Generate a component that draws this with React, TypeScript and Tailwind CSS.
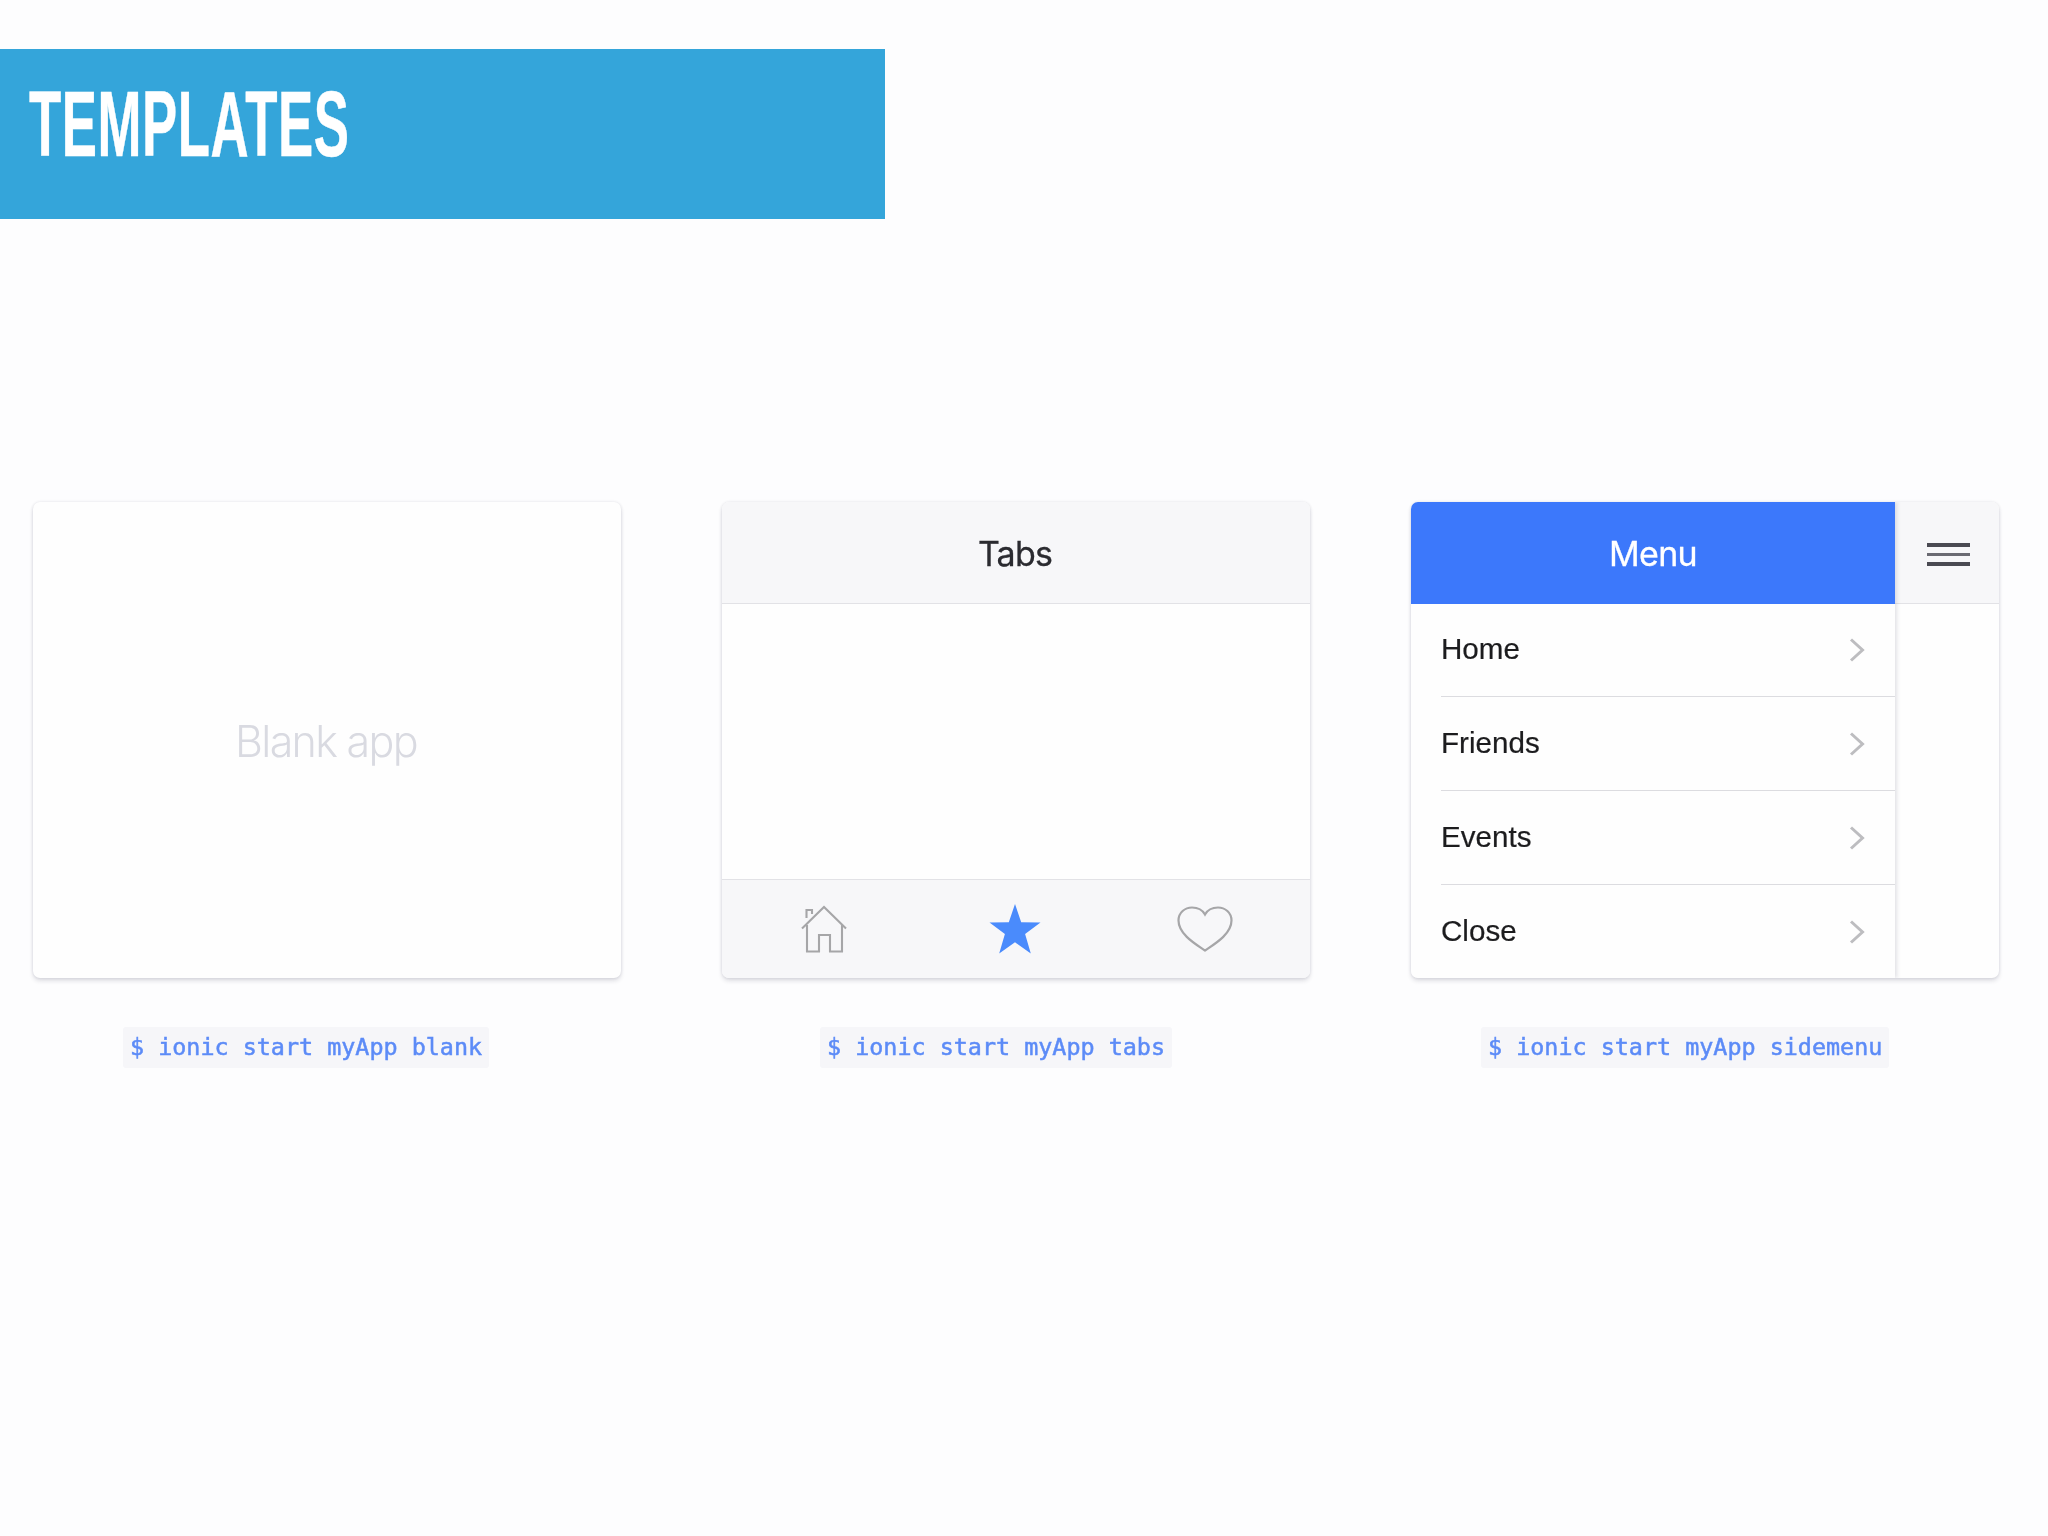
const menuItems = ["Home", "Friends", "Events", "Close"];

const HomeIcon = () => (
  <svg width="46" height="48" viewBox="0 0 46 48" fill="none" stroke="#a6a6a8" strokeWidth="2.1">
    <path d="M1 23.5 L23 2 L45 23.5" />
    <path d="M5.5 13 V5 H11 V9" />
    <path d="M6 20 V46.5 H18 V30 H29 V46.5 H41 V20" />
  </svg>
);

const StarIcon = () => (
  <svg width="52" height="52" viewBox="0 0 52 52" fill="#4a8bfc" className="ml-[5px]">
    <path d="M26 1 L32.2 19.2 L51.5 19.4 L36.1 31 L41.8 50.5 L26 39.3 L10.2 50.5 L15.9 31 L0.5 19.4 L19.8 19.2 Z" />
  </svg>
);

const HeartIcon = () => (
  <svg width="56" height="46" viewBox="0 0 56 46" fill="none" stroke="#a6a6a8" strokeWidth="2.2">
    <path d="M28 44.5 C21 39.5 1.5 29 1.5 14.5 C1.5 6.5 8 1.5 15 1.5 C20.5 1.5 25.5 4 28 8.5 C30.5 4 35.5 1.5 41 1.5 C48 1.5 54.5 6.5 54.5 14.5 C54.5 29 35 39.5 28 44.5 Z" />
  </svg>
);

const Chevron = () => (
  <svg width="16" height="24" viewBox="0 0 16 24" fill="none" stroke="#bdbdc0" strokeWidth="3">
    <path d="M2 1.5 L13.5 12 L2 22.5" />
  </svg>
);

const Command = ({ text, offset }: { text: string; offset: string }) => (
  <div className={`mt-[49px] ${offset} w-fit h-[41px] px-[7px] flex items-center bg-[#f6f6f9] rounded-[3px]`}>
    <code className="font-['DejaVu_Sans_Mono',monospace] text-[23.4px] leading-none text-[#5c8bf7] whitespace-pre [-webkit-text-stroke:0.5px_#5c8bf7] blur-[0.4px]">
      {text}
    </code>
  </div>
);

const cardClass =
  "w-[588px] h-[476px] rounded-[7px] bg-[#fefefe] overflow-hidden shadow-[0_0_3px_rgba(40,40,70,0.12),0_3px_4px_rgba(40,40,70,0.14)]";

export default function App() {
  return (
    <div className="min-h-screen w-full bg-[#fdfdfe] pt-[49px] font-['Inter',sans-serif]">
      {/* Title banner */}
      <div className="w-[885px] h-[170px] bg-[#34a5da] pl-[29px] pt-[19px] overflow-hidden">
        <h1 className="origin-left scale-x-[0.567] w-max font-['Liberation_Sans',sans-serif] font-bold text-[93px] tracking-[1px] leading-[112px] text-white [-webkit-text-stroke:0.5px_white] blur-[0.4px]">
          TEMPLATES
        </h1>
      </div>

      <div className="flex gap-[101px] pl-[33px] mt-[283px]">
        {/* Blank */}
        <div>
          <div className={`${cardClass} flex items-center justify-center pt-[2px] pr-[2px]`}>
            <span className="text-[43px] font-light tracking-[-1.7px] text-[#d9dae1] blur-[0.4px]">Blank app</span>
          </div>
          <Command text="$ ionic start myApp blank" offset="ml-[90px]" />
        </div>

        {/* Tabs */}
        <div>
          <div className={`${cardClass} flex flex-col`}>
            <div className="h-[102px] shrink-0 flex items-center justify-center pt-[2px] pr-[2px] bg-[#f7f7f9] border-b border-[#e2e2e6]">
              <span className="text-[34px] tracking-[-0.8px] text-[#2b2b30] [-webkit-text-stroke:0.3px_#2b2b30] blur-[0.3px]">Tabs</span>
            </div>
            <div className="flex-1" />
            <div className="h-[99px] shrink-0 flex items-center justify-between pl-[79px] pr-[77px] bg-[#f7f7f9] border-t border-[#e2e2e6]">
              <HomeIcon />
              <StarIcon />
              <HeartIcon />
            </div>
          </div>
          <Command text="$ ionic start myApp tabs" offset="ml-[98px]" />
        </div>

        {/* Sidemenu */}
        <div>
          <div className={`${cardClass} flex`}>
            <div className="w-[484px] shrink-0 flex flex-col shadow-[2px_0_4px_rgba(40,40,70,0.13)] z-10 bg-[#fefefe]">
              <div className="h-[102px] shrink-0 flex items-center justify-center bg-[#3c78fb]">
                <span className="text-[34px] tracking-[-0.7px] text-white [-webkit-text-stroke:0.3px_white] blur-[0.3px]">Menu</span>
              </div>
              <ul className="flex-1 flex flex-col -mt-[1px] pl-[30px] font-['Liberation_Sans',sans-serif]">
                {menuItems.map((item, index) => (
                  <li
                    key={item}
                    className={`flex-1 flex items-center justify-between pr-[30px] ${index < menuItems.length - 1 ? "border-b border-[#dcdce0]" : ""}`}
                  >
                    <span className="text-[29.6px] text-[#1c1c1e] [-webkit-text-stroke:0.2px_#1c1c1e] blur-[0.3px]">{item}</span>
                    <Chevron />
                  </li>
                ))}
              </ul>
            </div>
            <div className="flex-1 flex flex-col">
              <div className="h-[102px] flex flex-col items-center justify-center gap-[6px] pt-[3px] pl-[2px] bg-[#f7f7f9] border-b border-[#e2e2e6]">
                <span className="w-[43px] h-[4px] bg-[#4a4a52]" />
                <span className="w-[43px] h-[3px] bg-[#6a6a72]" />
                <span className="w-[43px] h-[4px] bg-[#4a4a52]" />
              </div>
            </div>
          </div>
          <Command text="$ ionic start myApp sidemenu" offset="ml-[70px]" />
        </div>
      </div>
    </div>
  );
}
